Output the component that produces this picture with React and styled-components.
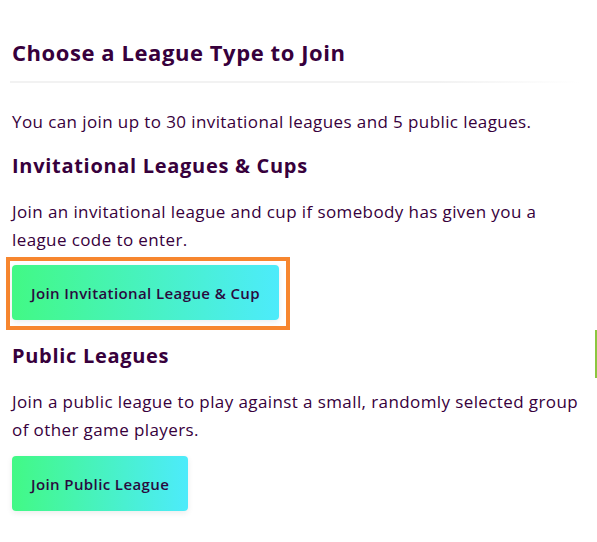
import React from "react";
import styled, { createGlobalStyle } from "styled-components";

const Global = createGlobalStyle`
  html, body { margin: 0; padding: 0; background: #fff; }
  body { font-family: "Open Sans", "Noto Sans", sans-serif; color: #37003c; }
`;

const Page = styled.main`
  position: relative;
  width: 597px;
  height: 542px;
  box-sizing: border-box;
  padding: 38px 0 0 12px;
  overflow: hidden;
`;

const Title = styled.h2`
  margin: 0;
  font-size: 22px;
  line-height: 28px;
  font-weight: 700;
  letter-spacing: 0.57px;
  color: #37003c;
`;

const Divider = styled.hr`
  margin: 15px 0 25px -2px;
  width: 570px;
  height: 2px;
  border: 0;
  background: linear-gradient(to right, #f2f2f2 0%, #f2f2f2 75%, rgba(242,242,242,0) 100%);
`;

const Text = styled.p`
  margin: 0 0 ${(p) => p.$gap || 0}px;
  font-size: 17px;
  line-height: 28px;
  font-weight: 400;
  letter-spacing: 0.4px;
  max-width: 584px;
  color: #37003c;
`;

const SubTitle = styled.h3`
  margin: 0 0 18px;
  font-size: 20px;
  line-height: 28px;
  font-weight: 700;
  letter-spacing: 0.7px;
  color: #37003c;
`;

const Focus = styled.div`
  display: inline-block;
  margin: 0 0 12px -6px;
  padding: 4px 7px 6px 2px;
  border: 4px solid #f7862f;
`;

const Button = styled.button`
  display: block;
  height: 55px;
  padding: 0 19px;
  border: 0;
  border-radius: 4px;
  background: linear-gradient(to right, #42f985 0%, #4debfb 100%);
  box-shadow: 0 2px 6px rgba(0, 0, 0, 0.08);
  font-family: "Open Sans", "Noto Sans", sans-serif;
  font-size: 15px;
  font-weight: 600;
  letter-spacing: 0.4px;
  color: #2a0a3e;
  cursor: pointer;
`;

const EdgeMark = styled.span`
  position: absolute;
  right: 0;
  top: 330px;
  width: 2px;
  height: 48px;
  background: #8cc63f;
`;

export default function App() {
  return (
    <>
      <Global />
      <Page>
        <Title>Choose a League Type to Join</Title>
        <Divider />
        <Text $gap={16}>You can join up to 30 invitational leagues and 5 public leagues.</Text>
        <SubTitle>Invitational Leagues &amp; Cups</SubTitle>
        <Text $gap={3}>Join an invitational league and cup if somebody has given you a league code to enter.</Text>
        <Focus>
          <Button>Join Invitational League &amp; Cup</Button>
        </Focus>
        <SubTitle>Public Leagues</SubTitle>
        <Text $gap={12}>Join a public league to play against a small, randomly selected group of other game players.</Text>
        <Button>Join Public League</Button>
        <EdgeMark />
      </Page>
    </>
  );
}
